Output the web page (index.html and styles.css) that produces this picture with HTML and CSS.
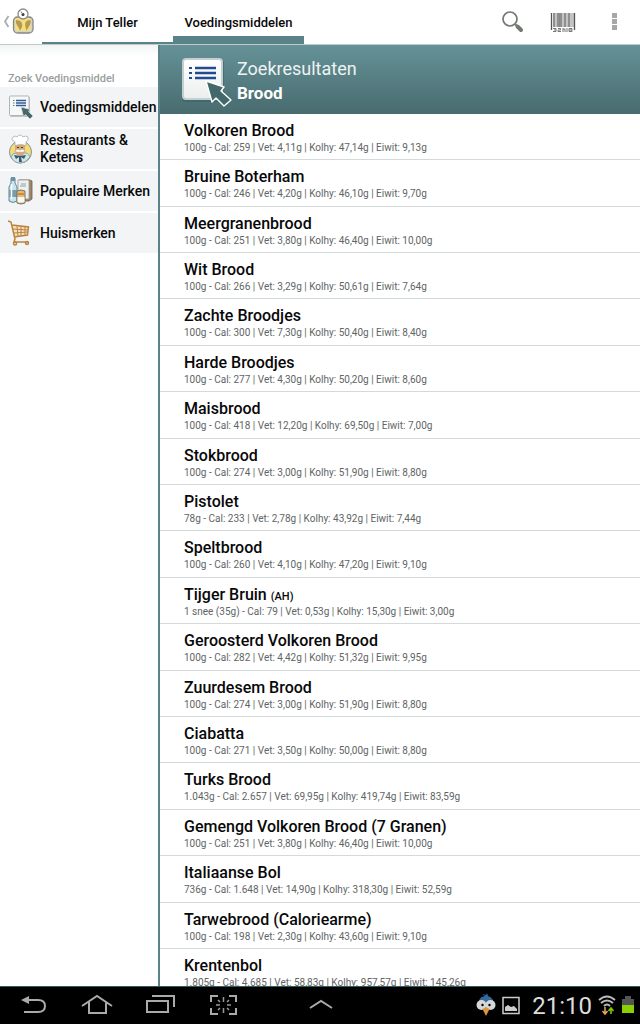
FILE: index.html
```html
<!DOCTYPE html>
<html lang="nl">
<head>
<meta charset="utf-8">
<meta name="viewport" content="width=device-width, initial-scale=1">
<title>Voedingsmiddelen</title>
<link rel="stylesheet" href="styles.css">
</head>
<body>
<header class="topbar">
  <button class="home" aria-label="Terug">
    <svg width="32" height="28" viewBox="0 0 32 28">
      <path d="M5.500 9L2 14.500L5.500 20" fill="none" stroke="#a6b0ac" stroke-width="1.800"/>
      <rect x="10.500" y="10" width="19.500" height="16" rx="4" fill="#d2d2ce" stroke="#898783" stroke-width="1.300"/>
      <path d="M12 14q0-3 3-3h10q3 0 3 3v7q0 3-3 3H15q-3 0-3-3z" fill="#f4df7e"/>
      <path d="M13 13c5 0 7 3 6 7l-2 4c-1-5-5-6-4-11zM27.500 13c-5 0-6 3-5 7l1 4c2-5 5-6 4-11z" fill="#b69a52"/>
      <circle cx="20" cy="7" r="5" fill="#fff" stroke="#8b8b88" stroke-width="1.300"/>
      <circle cx="20" cy="7.500" r="1.500" fill="#333"/><path d="M18 4.500l2 3" stroke="#777"/>
    </svg>
  </button>
  <nav class="tabs">
    <a class="tab" href="#teller">Mijn Teller</a>
    <a class="tab active" href="#voeding" aria-current="page">Voedingsmiddelen</a>
  </nav>
  <div class="actions">
    <button aria-label="Zoeken"><svg width="24" height="24" viewBox="0 0 24 24"><circle cx="9" cy="9" r="7" fill="none" stroke="#747872" stroke-width="1.700"/><path d="M14 14l2 2" stroke="#747872" stroke-width="2"/><path d="M16.500 16.500l3.500 3.500" stroke="#747872" stroke-width="4" stroke-linecap="round"/></svg></button>
    <button aria-label="Barcode scannen"><svg width="26" height="22" viewBox="0 0 26 22"><path d="M1.500 2v17M4 2v14M8 2v14M11 2v14M15 2v14M19 2v14M24.500 2v17" stroke="#555" stroke-width="1.300"/><path d="M6 2v14M9.500 2v14M13 2v14M17 2v14M21 2v14M23 2v14" stroke="#888" stroke-width="1"/><path d="M3 17.500h3v3H3M4 19h2M8 17.500h2.500v1.500H8v1.500h3M13 17v4M13 18h2v3M17 17v4M19 17.500h3v3h-3zM19 19h3" fill="none" stroke="#777" stroke-width="1"/></svg></button>
    <button aria-label="Meer opties"><svg width="8" height="20" viewBox="0 0 8 20"><path d="M1 1h5v5H1zM1 7h5v5H1zM1 13h5v5H1z" fill="#a7a7a7"/></svg></button>
  </div>
</header>

<div class="content">
  <aside class="sidebar">
    <h2>Zoek Voedingsmiddel</h2>
    <nav>
      <a class="category" href="#voedingsmiddelen">
        <svg width="28" height="32" viewBox="0 0 28 32"><rect x="4" y="6" width="20" height="20" rx="1" fill="#bfc3c3"/><rect x="3.500" y="5" width="19.500" height="19.500" rx="1" fill="#f7f8f8" stroke="#b1b5b5"/><path d="M10 9.500h10M10 12h10M10 14.500h10" stroke="#345d96" stroke-width="1.300"/><path d="M7 9.500h1.500M7 12h1.500M7 14.500h1.500" stroke="#55769f"/><path d="M15 16l9 2.500-1.500 2L27 25l-3 3-4.500-4.500-2 2z" fill="#44686b" stroke="#d9dfdf" stroke-width=".7"/></svg>
        <span>Voedingsmiddelen</span></a>
      <a class="category" href="#restaurants">
        <svg width="28" height="32" viewBox="0 0 28 32"><circle cx="14.500" cy="19" r="11" fill="#f4dc76" stroke="#899398"/><path d="M5 24q2-5 6-4l3 2 3-2q5-1 7 4-4 6-10 6-6 0-9-6z" fill="#d3e6ea" stroke="#78919a" stroke-width=".8"/><path d="M9 12h10v6q-1 5-5 5t-5-5z" fill="#dba874"/><path d="M8.500 18q3-3 5.500-1 2.500-2 5.500 1-3 2-5.500 1-2.500 1-5.500-1z" fill="#fff" stroke="#a4937c" stroke-width=".5"/><path d="M9 12.500V9Q4.500 7 7 4q2-2 4 0 3-4 6 0 3-2 5 0 1 3-2 5v3.500q-5-2-11 0z" fill="#fff" stroke="#a4adae" stroke-width=".8"/><path d="M8 22l6 1 6-1-2 4-3-2 1 5h-3l0-5-3 2z" fill="#365c6d"/><path d="M11 14.500h2M15 14.500h2" stroke="#493f35"/></svg>
        <span>Restaurants &amp; Ketens</span></a>
      <a class="category" href="#merken">
        <svg width="28" height="32" viewBox="0 0 28 32"><path d="M13 5h11l2 1v18l-3 2H13z" fill="#9d866b" stroke="#695e53" stroke-width=".8"/><path d="M12 5h11v19H12z" fill="#edf0ed" stroke="#9a9b95" stroke-width=".8"/><path d="M15 9h5M14 11h6" stroke="#88a1ad"/><path d="M5 3h4v5l2 4v14q-4 3-8 0V12l2-4z" fill="#c9e4ec" stroke="#638595"/><path d="M3 15h8v7H3z" fill="#799dab"/><path d="M5 2h4v4H5z" fill="#6d93a1"/><path d="M5.500 9v15" stroke="#fff" stroke-width="1.500"/><path d="M11 16q4-2 8 0v12q-4 2-8 0z" fill="#e4ba76" stroke="#76736c"/><path d="M11.500 22h7v5q-4 1-7 0z" fill="#f8f7f1"/><path d="M12 19h6" stroke="#d78933" stroke-width="2"/></svg>
        <span>Populaire Merken</span></a>
      <a class="category" href="#huismerken">
        <svg width="28" height="32" viewBox="0 0 28 32"><path d="M6 8l16 2-1 8-13 2z" fill="#f3dfc4"/><g fill="none" stroke="#bc843e" stroke-width="1.500"><path d="M2 4l3 1 4 17-1 3h14M6 8l16.500 2-1 8L8 20"/><path d="M7 12l15 1M8 16l14-1M11 9l1 10M15 9v10M19 10v8" stroke-width="1"/><circle cx="9" cy="26.500" r="1.500"/><circle cx="21" cy="26" r="1.500"/></g></svg>
        <span>Huismerken</span></a>
    </nav>
  </aside>

  <main class="results">
    <div class="banner">
      <svg width="54" height="56" viewBox="0 0 54 56">
        <defs><linearGradient id="paper" x2="0" y2="1"><stop stop-color="#fff"/><stop offset="1" stop-color="#eceeee"/></linearGradient></defs>
        <rect x="2" y="7" width="42" height="42" rx="3" fill="#3e6265" opacity=".6"/><rect x="3" y="6" width="39" height="40" rx="3" fill="url(#paper)" stroke="#c3cfd0" stroke-width="2"/>
        <path d="M15 15h21M15 20h21M15 25h21" stroke="#214c92" stroke-width="2.300"/><path d="M9 15h3M9 20h3M9 25h3" stroke="#214c92" stroke-width="2"/>
        <path d="M26 28l18 6-3 4 10 9-7 6-8-8-4 4z" fill="#42686b" stroke="#fff" stroke-width="1.400" stroke-linejoin="round"/>
      </svg>
      <h1>Zoekresultaten<strong>Brood</strong></h1>
    </div>
    <ul class="list">
      <li><h3>Volkoren Brood</h3><p>100g - Cal: 259 | Vet: 4,11g | Kolhy: 47,14g | Eiwit: 9,13g</p></li>
      <li><h3>Bruine Boterham</h3><p>100g - Cal: 246 | Vet: 4,20g | Kolhy: 46,10g | Eiwit: 9,70g</p></li>
      <li><h3>Meergranenbrood</h3><p>100g - Cal: 251 | Vet: 3,80g | Kolhy: 46,40g | Eiwit: 10,00g</p></li>
      <li><h3>Wit Brood</h3><p>100g - Cal: 266 | Vet: 3,29g | Kolhy: 50,61g | Eiwit: 7,64g</p></li>
      <li><h3>Zachte Broodjes</h3><p>100g - Cal: 300 | Vet: 7,30g | Kolhy: 50,40g | Eiwit: 8,40g</p></li>
      <li><h3>Harde Broodjes</h3><p>100g - Cal: 277 | Vet: 4,30g | Kolhy: 50,20g | Eiwit: 8,60g</p></li>
      <li><h3>Maisbrood</h3><p>100g - Cal: 418 | Vet: 12,20g | Kolhy: 69,50g | Eiwit: 7,00g</p></li>
      <li><h3>Stokbrood</h3><p>100g - Cal: 274 | Vet: 3,00g | Kolhy: 51,90g | Eiwit: 8,80g</p></li>
      <li><h3>Pistolet</h3><p>78g - Cal: 233 | Vet: 2,78g | Kolhy: 43,92g | Eiwit: 7,44g</p></li>
      <li><h3>Speltbrood</h3><p>100g - Cal: 260 | Vet: 4,10g | Kolhy: 47,20g | Eiwit: 9,10g</p></li>
      <li><h3>Tijger Bruin <small>(AH)</small></h3><p>1 snee (35g) - Cal: 79 | Vet: 0,53g | Kolhy: 15,30g | Eiwit: 3,00g</p></li>
      <li><h3>Geroosterd Volkoren Brood</h3><p>100g - Cal: 282 | Vet: 4,42g | Kolhy: 51,32g | Eiwit: 9,95g</p></li>
      <li><h3>Zuurdesem Brood</h3><p>100g - Cal: 274 | Vet: 3,00g | Kolhy: 51,90g | Eiwit: 8,80g</p></li>
      <li><h3>Ciabatta</h3><p>100g - Cal: 271 | Vet: 3,50g | Kolhy: 50,00g | Eiwit: 8,80g</p></li>
      <li><h3>Turks Brood</h3><p>1.043g - Cal: 2.657 | Vet: 69,95g | Kolhy: 419,74g | Eiwit: 83,59g</p></li>
      <li><h3>Gemengd Volkoren Brood (7 Granen)</h3><p>100g - Cal: 251 | Vet: 3,80g | Kolhy: 46,40g | Eiwit: 10,00g</p></li>
      <li><h3>Italiaanse Bol</h3><p>736g - Cal: 1.648 | Vet: 14,90g | Kolhy: 318,30g | Eiwit: 52,59g</p></li>
      <li><h3>Tarwebrood (Caloriearme)</h3><p>100g - Cal: 198 | Vet: 2,30g | Kolhy: 43,60g | Eiwit: 9,10g</p></li>
      <li><h3>Krentenbol</h3><p>1.805g - Cal: 4.685 | Vet: 58,83g | Kolhy: 957,57g | Eiwit: 145,26g</p></li>
    </ul>
  </main>
</div>

<footer class="system">
  <button aria-label="Vorige"><svg width="32" height="28" viewBox="0 0 32 28"><path d="M8 8h12q7 0 7 6t-7 6H6" fill="none" stroke="#aaa" stroke-width="2"/><path d="M3 8l8-4v8z" fill="#aaa"/></svg></button>
  <button aria-label="Startscherm"><svg width="32" height="28" viewBox="0 0 32 28"><path d="M1 14L16 4l15 10M8 10v11h17V10" fill="none" stroke="#aaa" stroke-width="2"/></svg></button>
  <button aria-label="Recente apps"><svg width="32" height="28" viewBox="0 0 32 28"><path d="M3 9h21v11H3zM8 4h22v11" fill="none" stroke="#aaa" stroke-width="2"/></svg></button>
  <button aria-label="Schermafbeelding"><svg width="32" height="28" viewBox="0 0 32 28"><path d="M4 10V4h7M22 4h7v6M29 16v6h-7M11 22H4v-6" fill="none" stroke="#aaa" stroke-width="2"/><path d="M16.500 5v5M16.500 16v5M9 13h4M20 13h4M11 8l2 2M22 8l-2 2M11 18l2-2M22 18l-2-2" stroke="#999" stroke-width="1.500"/></svg></button>
  <button class="expand" aria-label="Uitklappen"><svg width="26" height="28" viewBox="0 0 26 28"><path d="M2 16l11-7 11 7" fill="none" stroke="#aaa" stroke-width="2"/></svg></button>
  <div class="status">
    <svg width="20" height="26" viewBox="0 0 20 26"><path d="M3 9q0-5 6-6L6 1l4 1 1-2 1 3q6 2 6 9l-3 4H4z" fill="#35699b"/><circle cx="5.500" cy="12" r="5" fill="#d3d8d7"/><circle cx="14.500" cy="12" r="5" fill="#d3d8d7"/><circle cx="6.500" cy="12" r="1.200"/><circle cx="13.500" cy="12" r="1.200"/><path d="M6.500 16l3.500-2 3.500 2-3.500 7z" fill="#dc953d"/></svg>
    <svg width="18" height="26" viewBox="0 0 18 26"><path d="M1 4.500h16v16H1z" fill="none" stroke="#ccc" stroke-width="1.500"/><path d="M3 18v-4l3-2 3 2 3-1 3 3v2z" fill="#ccc"/></svg>
    <time>21:10</time>
    <svg width="18" height="26" viewBox="0 0 18 26"><path d="M1 7q8-7 16 0M3 10q6-5 12 0M6 13q3-3 6 0" fill="none" stroke="#bbb" stroke-width="2"/><path d="M7 14v6M4.500 18L7 21l2.500-3" fill="none" stroke="#e6a953" stroke-width="1.500"/><path d="M13 21v-6M10.500 18l2.500-3 2.500 3" fill="none" stroke="#83cf00" stroke-width="1.500"/></svg>
    <svg width="12" height="26" viewBox="0 0 12 26"><path d="M3 3h6v3h3v6H0V6h3z" fill="#555"/><path d="M0 12h12v8H0z" fill="#8bd000"/></svg>
  </div>
</footer>
</body>
</html>
```

FILE: styles.css
```css
* { box-sizing: border-box; }

body {
  margin: 0;
  height: 100vh;
  display: flex;
  flex-direction: column;
  font-family: Roboto, "Liberation Sans", sans-serif;
  color: #080808;
  background: #fff;
}

button { padding: 0; border: 0; background: none; }
svg { display: block; flex: none; }
a { color: inherit; text-decoration: none; }
h1, h2, h3, p, ul { margin: 0; padding: 0; font-weight: 500; }

/* Top bar */
.topbar {
  flex: none;
  display: flex;
  height: 45px;
  border-bottom: 1px solid #c3caca;
}
.home { display: flex; align-items: center; width: 42px; padding: 0 0 2px 3px; }
.tabs { display: flex; }
.tab {
  width: 131px;
  border-bottom: 2px solid #5a8388;
  font-size: 13px;
  font-weight: 500;
  line-height: 45px;
  text-align: center;
}
.tab.active { border-bottom-width: 8px; }
.actions { display: flex; align-items: center; margin-left: auto; padding-right: 21px; }
.actions button + button { margin-left: 25px; }
.actions button + button + button { margin-left: 35px; }

/* Columns */
.content { flex: 1; min-height: 0; display: flex; }
.sidebar {
  width: 25%;
  flex: none;
  overflow: hidden;
  border-right: 2px solid #5a8388;
  background: linear-gradient(#f3f5f5, #fff 12px);
}
.sidebar h2 {
  padding: 27px 0 2px 8px;
  color: #9a9e9e;
  font-size: 11px;
  line-height: 13px;
}
.sidebar nav { display: flex; flex-direction: column; gap: 1px; }
.category {
  display: flex;
  align-items: center;
  gap: 6px;
  height: 41px;
  padding-left: 6px;
  border-bottom: 1px solid #fff;
  background: #f2f4f6;
  font-size: 14px;
  font-weight: 500;
  line-height: 17px;
}

/* Results */
.results { flex: 1; min-width: 0; display: flex; flex-direction: column; overflow: hidden; }
.banner {
  flex: none;
  display: flex;
  align-items: center;
  gap: 3px;
  height: 69px;
  padding: 2px 0 0 20px;
  color: #fff;
  background: linear-gradient(#659297, #486b6f);
}
.banner h1 { font-size: 18px; font-weight: 400; line-height: 24px; color: #eef3f3; }
.banner strong { display: block; font-size: 17px; font-weight: 700; color: #fff; }

.list { list-style: none; }
.list li { height: 46px; padding: 7px 0 0 24px; border-bottom: 1px solid #d3dada; }
.list li:nth-child(5n + 2), .list li:nth-child(5n + 5) { height: 47px; }
.list h3 { height: 20px; font-size: 16px; line-height: 20px; }
.list small { font-size: 11px; }
.list p { color: #606565; font-size: 10px; font-weight: 400; line-height: 14px; }

/* System bar */
.system {
  flex: none;
  display: flex;
  align-items: center;
  gap: 31px;
  height: 38px;
  padding: 0 6px 0 18px;
  border-top: 1px solid #34595c;
  background: #000;
}
.expand { margin-left: 38px; }
.status { display: flex; align-items: center; gap: 6px; margin-left: auto; }
.status time { margin-left: 6px; color: #ddd; font-size: 24px; line-height: 30px; }
```
